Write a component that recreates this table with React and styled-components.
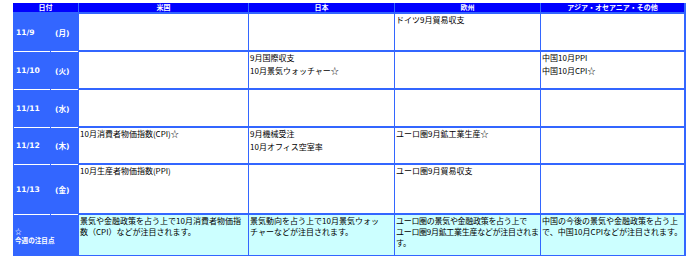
import React from "react";
import styled, { createGlobalStyle } from "styled-components";

const GlobalStyle = createGlobalStyle`
  html, body { margin: 0; padding: 0; background: #ffffff; }
  body { font-family: "Noto Sans CJK JP", "Liberation Sans", sans-serif; }
`;

const Table = styled.div`
  display: grid;
  grid-template-columns: 65px 169px 145px 145px 143px;
  grid-template-rows: 9px 36px 36px 36px 35px 48px 40px;
  gap: 2px 1px;
  width: max-content;
  margin: 3px 0 0 13px;
  padding: 0 2px 1px 0;
  background: #3366ff;
`;

const HeadCell = styled.div`
  background: #0000ff;
  color: #ffffff;
  font-family: "Noto Sans CJK JP", sans-serif;
  font-weight: 700;
  font-size: 7px;
  line-height: 9px;
  text-align: center;
  white-space: nowrap;
  overflow: hidden;
`;

const DateCell = styled.div`
  display: flex;
  gap: 1px;
  padding-left: 1px;
  background: #3366ff;
`;

const DatePart = styled.div`
  position: relative;
  width: ${(p) => p.$w}px;
  padding-left: ${(p) => p.$pad}px;
  box-sizing: border-box;
  display: flex;
  align-items: center;
  color: #ffffff;
  font-family: "DejaVu Sans", "Noto Sans CJK JP", sans-serif;
  font-weight: 700;
  font-size: 7.6px;
  white-space: nowrap;
  &::after {
    content: "";
    position: absolute;
    left: 0;
    right: 0;
    bottom: -2px;
    height: 1px;
    background: #ffffff;
  }
`;

const NoteLabel = styled.div`
  display: flex;
  flex-direction: column;
  justify-content: center;
  padding: 2px 0 0 2px;
  background: #3366ff;
  color: #ffffff;
  font-family: "Noto Sans CJK JP", sans-serif;
  font-weight: 700;
  font-size: 6.6px;
  line-height: 9px;
  white-space: nowrap;
`;

const Cell = styled.div`
  display: flex;
  flex-direction: column;
  gap: 2px;
  padding: 0 0 0 1px;
  background: ${(p) => (p.$note ? "#ccffff" : "#ffffff")};
  color: #000000;
  font-family: "Noto Sans CJK JP", sans-serif;
  font-size: 8px;
  line-height: 11px;
  overflow: hidden;
`;

const NoteText = styled.div`
  display: flex;
  flex-direction: column;
  letter-spacing: ${(p) => (p.$tight ? "-0.3px" : "0")};
`;

const Line = styled.span`
  display: block;
  white-space: nowrap;
`;

const days = [
  {
    date: "11/9",
    wd: "(月)",
    cells: [[], [], ["ドイツ9月貿易収支"], []],
  },
  {
    date: "11/10",
    wd: "(火)",
    cells: [[], ["9月国際収支", "10月景気ウォッチャー☆"], [], ["中国10月PPI", "中国10月CPI☆"]],
  },
  {
    date: "11/11",
    wd: "(水)",
    cells: [[], [], [], []],
  },
  {
    date: "11/12",
    wd: "(木)",
    cells: [
      ["10月消費者物価指数(CPI)☆"],
      ["9月機械受注", "10月オフィス空室率"],
      ["ユーロ圏9月鉱工業生産☆"],
      [],
    ],
  },
  {
    date: "11/13",
    wd: "(金)",
    cells: [["10月生産者物価指数(PPI)"], [], ["ユーロ圏9月貿易収支"], []],
  },
];

const notes = [
  { lines: ["景気や金融政策を占う上で10月消費者物価指", "数（CPI）などが注目されます。"] },
  { lines: ["景気動向を占う上で10月景気ウォッ", "チャーなどが注目されます。"] },
  {
    lines: ["ユーロ圏の景気や金融政策を占う上で", "ユーロ圏9月鉱工業生産などが注目されま", "す。"],
    tight: true,
  },
  { lines: ["中国の今後の景気や金融政策を占う上", "で、中国10月CPIなどが注目されます。"] },
];

const heads = ["日付", "米国", "日本", "欧州", "アジア・オセアニア・その他"];

export default function App() {
  return (
    <>
      <GlobalStyle />
      <Table>
        {heads.map((h) => (
          <HeadCell key={h}>{h}</HeadCell>
        ))}
        {days.map((d) => (
          <React.Fragment key={d.date}>
            <DateCell>
              <DatePart $w={36} $pad={2}>{d.date}</DatePart>
              <DatePart $w={27} $pad={4}>{d.wd}</DatePart>
            </DateCell>
            {d.cells.map((items, i) => (
              <Cell key={i}>
                {items.map((t) => (
                  <Line key={t}>{t}</Line>
                ))}
              </Cell>
            ))}
          </React.Fragment>
        ))}
        <NoteLabel>
          <span>☆</span>
          <span>今週の注目点</span>
        </NoteLabel>
        {notes.map((n, i) => (
          <Cell key={i} $note>
            <NoteText $tight={n.tight}>
              {n.lines.map((l) => (
                <Line key={l}>{l}</Line>
              ))}
            </NoteText>
          </Cell>
        ))}
      </Table>
    </>
  );
}
